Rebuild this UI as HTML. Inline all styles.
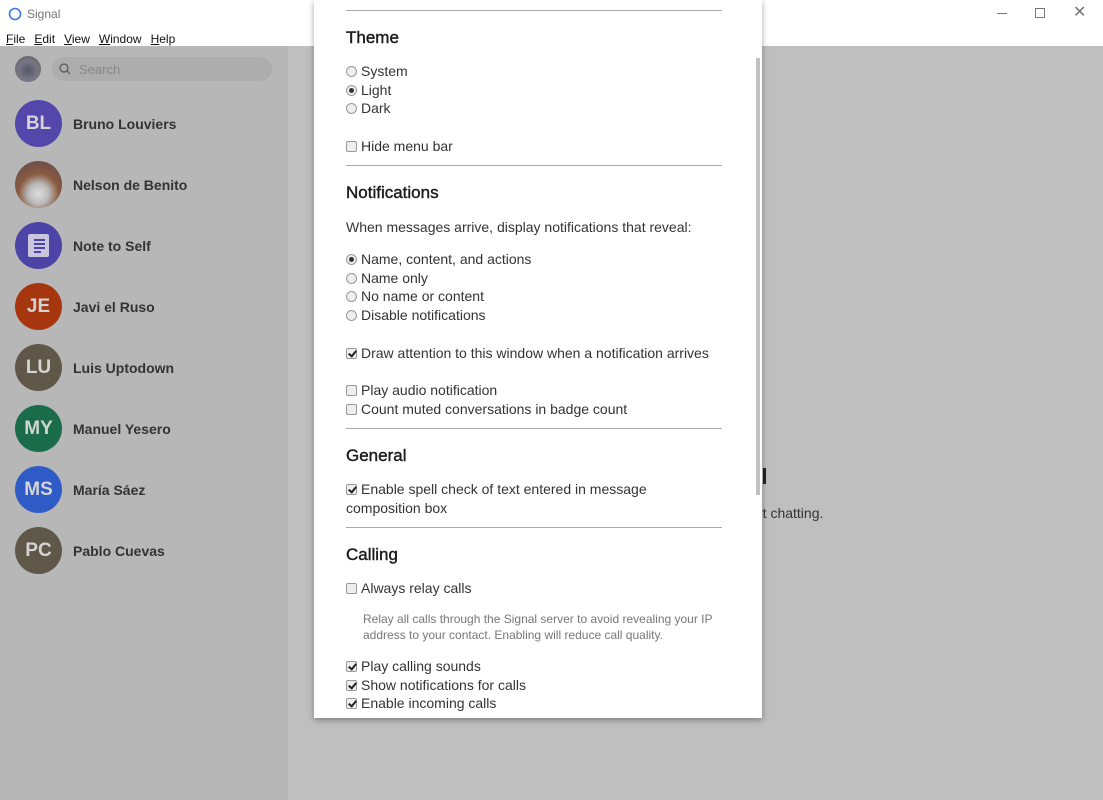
<!DOCTYPE html>
<html><head><style>
*{margin:0;padding:0;box-sizing:border-box}
body{width:1103px;height:800px;overflow:hidden;font-family:"Liberation Sans",sans-serif;background:#fff;position:relative;color:#222}
.a{position:absolute}
.title{left:0;top:0;width:1103px;height:46px;background:#fff}
.side{left:0;top:46px;width:288px;height:754px;background:#b7b7b7}
.main{left:288px;top:46px;width:815px;height:754px;background:#bfbfbf}
.menu span{margin-right:9px;font-size:12px;color:#111}
.av{position:absolute;left:15px;width:47px;height:47px;border-radius:50%;color:#d4d4d4;font-weight:bold;font-size:19px;text-align:center;line-height:47px}
.nm{position:absolute;left:73px;font-size:14px;font-weight:bold;color:#333}
.dlg{left:314px;top:0;width:448px;height:718px;background:#fff;box-shadow:0 2px 6px rgba(0,0,0,.35)}
.t{position:absolute;left:32px;font-size:14px;color:#333;white-space:nowrap}
.h{position:absolute;left:32px;font-size:17px;color:#1a1a1a;-webkit-text-stroke:0.4px #1a1a1a}
.hr{position:absolute;left:32px;width:376px;height:1px;background:#a9a9a9}
.r,.c{display:inline-block;width:11px;height:11px;border:1px solid #999;background:#eee;vertical-align:-1px;margin-right:4px;position:relative}
.r{border-radius:50%}
.r.on::after{content:"";position:absolute;left:2px;top:2px;width:5px;height:5px;border-radius:50%;background:#333}
.c{border-radius:2px}
.c.on::after{content:"";position:absolute;left:3px;top:0px;width:3px;height:6px;border:solid #222;border-width:0 2px 2px 0;transform:rotate(40deg)}
.ln{position:absolute;left:6px;width:11px;height:2px;background:#4d44a7}
</style></head><body>
<div class="a title"></div>
<svg class="a" style="left:8px;top:7px" width="14" height="14" viewBox="0 0 14 14"><circle cx="7" cy="7" r="5.5" fill="none" stroke="#3a76f0" stroke-width="1.6"/></svg>
<div class="a" style="left:27px;top:7px;font-size:12px;color:#777">Signal</div>
<div class="a menu" style="left:6px;top:30px"><span><u>F</u>ile</span><span><u>E</u>dit</span><span><u>V</u>iew</span><span><u>W</u>indow</span><span><u>H</u>elp</span></div>
<div class="a" style="left:997px;top:13px;width:10px;height:1px;background:#777"></div>
<div class="a" style="left:1035px;top:8px;width:10px;height:10px;border:1px solid #777"></div>
<div class="a" style="left:1073px;top:2px;font-size:16px;color:#777">✕</div>
<div class="a side"></div>
<div class="a main"></div>
<div class="a" style="left:15px;top:56px;width:26px;height:26px;border-radius:50%;background:radial-gradient(circle at 50% 55%,#556 0,#778 50%,#654 100%)"></div>
<div class="a" style="left:52px;top:57px;width:220px;height:24px;border-radius:12px;background:#adadad"></div>
<svg class="a" style="left:59px;top:63px" width="12" height="12" viewBox="0 0 12 12"><circle cx="5" cy="5" r="4" fill="none" stroke="#555" stroke-width="1.2"/><path d="M8 8l3 3" stroke="#555" stroke-width="1.2"/></svg>
<div class="a" style="left:79px;top:62px;font-size:13px;color:#888">Search</div>
<div class="av" style="top:100px;background:#5446ab">BL</div><div class="nm" style="top:116px">Bruno Louviers</div>
<div class="av" style="top:161px;background:radial-gradient(circle at 50% 70%,#ddd 0,#bbb 25%,#8a5a40 50%,#5a4a50 100%)"></div><div class="nm" style="top:177px">Nelson de Benito</div>
<div class="av" style="top:222px;background:#4d44a7"><div style="position:absolute;left:13px;top:12px;width:21px;height:23px;background:#c9c6de;border-radius:2px"><div class="ln" style="top:5px"></div><div class="ln" style="top:9px"></div><div class="ln" style="top:13px"></div><div class="ln" style="top:17px;width:7px"></div></div></div><div class="nm" style="top:238px">Note to Self</div>
<div class="av" style="top:283px;background:#a5360e">JE</div><div class="nm" style="top:299px">Javi el Ruso</div>
<div class="av" style="top:344px;background:#5f5849">LU</div><div class="nm" style="top:360px">Luis Uptodown</div>
<div class="av" style="top:405px;background:#1b6c4b">MY</div><div class="nm" style="top:421px">Manuel Yesero</div>
<div class="av" style="top:466px;background:#2f5bc6">MS</div><div class="nm" style="top:482px">María Sáez</div>
<div class="av" style="top:527px;background:#5f5849">PC</div><div class="nm" style="top:543px">Pablo Cuevas</div>
<div class="a" style="left:763px;top:468px;width:3px;height:16px;background:#222"></div>
<div class="a" style="left:758px;top:505px;font-size:14px;color:#333">rt chatting.</div>
<div class="a dlg">
<div class="hr" style="top:10px"></div>
<div class="h" style="top:28px">Theme</div>
<div class="t" style="top:63px"><i class="r"></i>System</div>
<div class="t" style="top:82px"><i class="r on"></i>Light</div>
<div class="t" style="top:100px"><i class="r"></i>Dark</div>
<div class="t" style="top:138px"><i class="c"></i>Hide menu bar</div>
<div class="hr" style="top:165px"></div>
<div class="h" style="top:183px">Notifications</div>
<div class="t" style="top:219px">When messages arrive, display notifications that reveal:</div>
<div class="t" style="top:251px"><i class="r on"></i>Name, content, and actions</div>
<div class="t" style="top:270px"><i class="r"></i>Name only</div>
<div class="t" style="top:288px"><i class="r"></i>No name or content</div>
<div class="t" style="top:307px"><i class="r"></i>Disable notifications</div>
<div class="t" style="top:345px"><i class="c on"></i>Draw attention to this window when a notification arrives</div>
<div class="t" style="top:382px"><i class="c"></i>Play audio notification</div>
<div class="t" style="top:401px"><i class="c"></i>Count muted conversations in badge count</div>
<div class="hr" style="top:428px"></div>
<div class="h" style="top:446px">General</div>
<div class="t" style="top:481px"><i class="c on"></i>Enable spell check of text entered in message</div>
<div class="t" style="top:500px">composition box</div>
<div class="hr" style="top:527px"></div>
<div class="h" style="top:545px">Calling</div>
<div class="t" style="top:580px"><i class="c"></i>Always relay calls</div>
<div class="t" style="top:611px;left:49px;font-size:12px;color:#777;line-height:16px">Relay all calls through the Signal server to avoid revealing your IP<br>address to your contact. Enabling will reduce call quality.</div>
<div class="t" style="top:658px"><i class="c on"></i>Play calling sounds</div>
<div class="t" style="top:677px"><i class="c on"></i>Show notifications for calls</div>
<div class="t" style="top:695px"><i class="c on"></i>Enable incoming calls</div>
<div class="a" style="left:442px;top:58px;width:4px;height:437px;background:#c1c1c1"></div>
</div>
</body></html>
